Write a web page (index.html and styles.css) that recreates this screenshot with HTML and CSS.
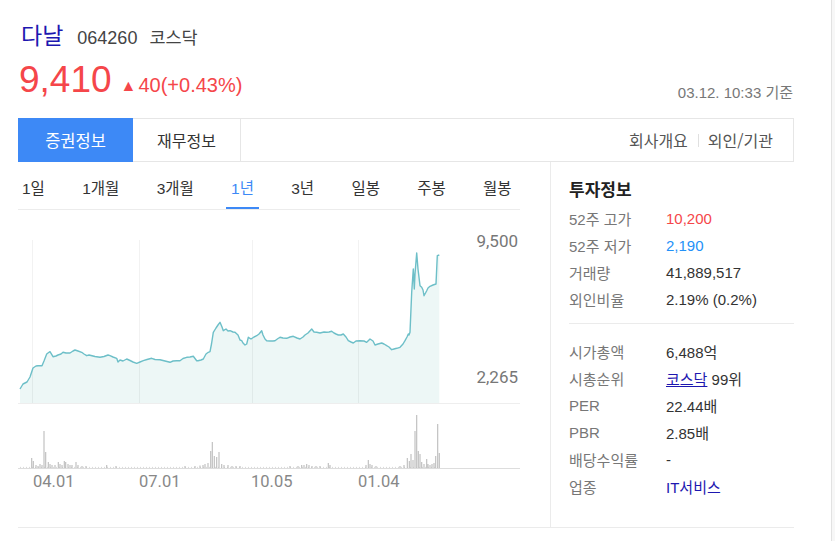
FILE: index.html
```html
<!DOCTYPE html>
<html lang="ko">
<head>
<meta charset="utf-8">
<title>다날</title>
<link rel="stylesheet" href="styles.css">
</head>
<body>
<div class="page">
  <header class="head">
    <div class="title-row">
      <a class="name">다날</a>
      <span class="code">064260</span>
      <span class="market">코스닥</span>
    </div>
    <div class="price-row">
      <div class="price">
        <span class="now">9,410</span>
        <span class="change"><span class="tri">▲</span>40(+0.43%)</span>
      </div>
      <div class="time">03.12. 10:33 기준</div>
    </div>
  </header>

  <div class="main">
    <nav class="tabs">
      <a class="tab active">증권정보</a>
      <a class="tab">재무정보</a>
      <div class="tab-links">
        <a>회사개요</a><span class="bar"></span><a>외인/기관</a>
      </div>
    </nav>

    <div class="cols">
      <section class="left">
        <ul class="periods">
          <li>1일</li>
          <li>1개월</li>
          <li>3개월</li>
          <li class="on">1년</li>
          <li>3년</li>
          <li>일봉</li>
          <li>주봉</li>
          <li>월봉</li>
        </ul>
        <svg class="chart" width="502" height="290" viewBox="18 211 502 290">
          <path class="fill" d="M20,390 L23,385 27,383 30,378 33,369 36,367 38,366.7 42,366.7 44,362 46.7,355 48,354 50,352.7 53,357.7 56,357 58,356 61,355 63,353.3 66,354 70,354 73,352 75,351 78,352 81.7,353.3 84,355 86.7,356.7 89,356 92,356.7 95,357.5 100,358.3 104,357.5 108,356 110,356.7 113,358 116.7,359.3 118,363 120,361 123,362 126.7,360 130,361.5 133,363 136.7,364.3 140,363 143.3,361.7 147,360.5 151.7,359.3 155,360.5 160,360.7 165,362 170,363.3 173,362 176.7,361.7 180,361.7 183,359.5 186.7,358.3 190,358 193.3,357.3 196.7,361.7 198,361.7 201,361 203.3,360 206,355 208.3,353.3 210,352.7 211.5,345 213.3,333.3 216,329 218,326 220,323.3 222,328 223.3,331.7 226,330 228,332 230,331.7 233,333 235,333.3 238,336 240,341 241.7,341.7 243,344 245,346 246.7,345 248.3,338.3 251,340 254,338 256.7,336.7 259,335 261.7,331.7 263,336 265,340 266.7,341.7 270,342 273,342 275,341.7 278,339.5 280,338.3 283,339 286.7,339.3 290,338 293.3,337.3 297,339 300,340 303,338 305,336 308,334 311.7,330 314,333 316.7,333.3 320,334 324,333 326.7,333.3 329,333 331.7,332.3 334,334 336,335 338.3,336 341,336 343.3,335 346,338 348.3,341.7 351,343 353.3,344 356,342 360,341.7 364,342 366.7,343.3 368,342 370,340 373,342 375,346 378,345 381.7,344 384,345 386.7,346.7 389,348 391.7,350.7 394,350 396.7,349.3 400,348.3 403,345 405,341.7 407,338 408.3,335 409,336 410,333.3 411.7,293.3 413.3,270 414.3,290 415,275 416.7,254 418,270 420,286.7 421.7,288.3 423,291 424,296.7 425.5,294 426.7,291.7 428,289 430,287.3 433,286 436,285 437.3,256.7 439.3,256 L439.3,404 L20,404 Z"/>
          <g class="grid">
            <path d="M32.5,241V404M139.5,241V404M252.5,241V404M358.5,241V404"/>
          </g>
          <path class="axis" d="M18,404.5H520"/>
          <polyline class="line" points="20,390 23,385 27,383 30,378 33,369 36,367 38,366.7 42,366.7 44,362 46.7,355 48,354 50,352.7 53,357.7 56,357 58,356 61,355 63,353.3 66,354 70,354 73,352 75,351 78,352 81.7,353.3 84,355 86.7,356.7 89,356 92,356.7 95,357.5 100,358.3 104,357.5 108,356 110,356.7 113,358 116.7,359.3 118,363 120,361 123,362 126.7,360 130,361.5 133,363 136.7,364.3 140,363 143.3,361.7 147,360.5 151.7,359.3 155,360.5 160,360.7 165,362 170,363.3 173,362 176.7,361.7 180,361.7 183,359.5 186.7,358.3 190,358 193.3,357.3 196.7,361.7 198,361.7 201,361 203.3,360 206,355 208.3,353.3 210,352.7 211.5,345 213.3,333.3 216,329 218,326 220,323.3 222,328 223.3,331.7 226,330 228,332 230,331.7 233,333 235,333.3 238,336 240,341 241.7,341.7 243,344 245,346 246.7,345 248.3,338.3 251,340 254,338 256.7,336.7 259,335 261.7,331.7 263,336 265,340 266.7,341.7 270,342 273,342 275,341.7 278,339.5 280,338.3 283,339 286.7,339.3 290,338 293.3,337.3 297,339 300,340 303,338 305,336 308,334 311.7,330 314,333 316.7,333.3 320,334 324,333 326.7,333.3 329,333 331.7,332.3 334,334 336,335 338.3,336 341,336 343.3,335 346,338 348.3,341.7 351,343 353.3,344 356,342 360,341.7 364,342 366.7,343.3 368,342 370,340 373,342 375,346 378,345 381.7,344 384,345 386.7,346.7 389,348 391.7,350.7 394,350 396.7,349.3 400,348.3 403,345 405,341.7 407,338 408.3,335 409,336 410,333.3 411.7,293.3 413.3,270 414.3,290 415,275 416.7,254 418,270 420,286.7 421.7,288.3 423,291 424,296.7 425.5,294 426.7,291.7 428,289 430,287.3 433,286 436,285 437.3,256.7 439.3,256"/>
          <text class="ylab" x="518" y="248" text-anchor="end">9,500</text>
          <text class="ylab" x="518" y="384" text-anchor="end">2,265</text>

          <path class="vol-base" d="M18,469.5H520"/>
          <path class="vol-tiny" d="M20,468.4H439"/>
          <path class="vol" d="M31.7,469V459M33.3,469V462M36,469V466M38,469V467M40,469V465M42,469V466M44,469V432M45.7,469V453M48.3,469V463M50,469V465M52,469V466M55,469V466M58.3,469V463M60,469V465M62,469V466M64.3,469V462M65.7,469V463M68,469V465M70,469V466M72,469V466M76,469V463M78,469V466M82,469V467M86,469V467M106.7,469V466M116,469V467M185,469V467M195,469V467M200,469V466.5M203,469V466M205,469V465M208,469V464M210.7,469V452M212.3,469V443M214.3,469V457M216.7,469V458M219,469V453M221.7,469V465M224,469V466M228,469V466M232,469V467M236,469V467M240,469V467M290,469V467M298,469V467M301.7,469V466M304,469V466M306.7,469V465M309,469V466M312,469V467M316,469V467M320,469V467M328.3,469V464M330,469V466M366,469V466M368.3,469V461M370,469V465M372,469V466M376,469V467M400,469V467M404,469V466M407.3,469V459M409.3,469V462M411,469V455M413,469V461M415,469V432M416.7,469V416M418.3,469V452M420,469V455M421.7,469V463M424,469V465M426.7,469V460M428,469V465M430,469V466M432,469V465M434,469V464M435.7,469V457M437.7,469V425M439.3,469V454"/>

          <text class="xlab" x="33" y="488">04.01</text>
          <text class="xlab" x="139" y="488">07.01</text>
          <text class="xlab" x="251" y="488">10.05</text>
          <text class="xlab" x="358" y="488">01.04</text>
        </svg>
      </section>

      <aside class="right">
        <h3 class="info-title">투자정보</h3>
        <dl class="info">
          <div class="row"><dt>52주 고가</dt><dd class="up">10,200</dd></div>
          <div class="row"><dt>52주 저가</dt><dd class="down">2,190</dd></div>
          <div class="row"><dt>거래량</dt><dd>41,889,517</dd></div>
          <div class="row"><dt>외인비율</dt><dd>2.19% (0.2%)</dd></div>
        </dl>
        <dl class="info second">
          <div class="row"><dt>시가총액</dt><dd>6,488억</dd></div>
          <div class="row"><dt>시총순위</dt><dd><a class="link ul">코스닥</a> 99위</dd></div>
          <div class="row"><dt>PER</dt><dd>22.44배</dd></div>
          <div class="row"><dt>PBR</dt><dd>2.85배</dd></div>
          <div class="row"><dt>배당수익률</dt><dd>-</dd></div>
          <div class="row"><dt>업종</dt><dd><a class="link">IT서비스</a></dd></div>
        </dl>
      </aside>
    </div>
  </div>
</div>
</body>
</html>
```

FILE: styles.css
```css
html {
  background: #f7f7f7;
}
body {
  margin: 0;
  font-family: "Liberation Sans", "Noto Sans CJK KR", sans-serif;
  color: #333;
}
.page {
  width: 831px;
  min-height: 541px;
  background: #fff;
  border-right: 1px solid #e2e2e2;
}
a { text-decoration: none; color: inherit; }

.head {
  padding: 17px 0 0 0;
}
.title-row {
  display: flex;
  align-items: baseline;
  padding-left: 21px;
  height: 32px;
}
.name {
  font-size: 23px;
  color: #1d17b0;
  font-family: "Noto Sans CJK KR", sans-serif;
  margin-right: 14px;
}
.code {
  font-size: 18px;
  color: #444;
  margin-right: 12px;
}
.market {
  font-size: 17.5px;
  color: #444;
  font-family: "Noto Sans CJK KR", sans-serif;
}
.price-row {
  display: flex;
  justify-content: space-between;
  align-items: flex-end;
  width: 776px;
  margin-left: 18px;
  margin-top: 9px;
  height: 42px;
}
.price {
  display: flex;
  align-items: baseline;
  color: #f5464a;
  padding-left: 1px;
}
.now {
  font-size: 37px;
  line-height: 40px;
  margin-right: 9px;
}
.change {
  font-size: 20px;
}
.tri {
  font-size: 16px;
  margin-right: 2px;
  position: relative;
  top: -1px;
}
.time {
  font-size: 15px;
  color: #777;
  line-height: 16px;
  padding-right: 1px;
  margin-bottom: -1px;
}

.main {
  width: 776px;
  margin-left: 18px;
  margin-top: 18px;
}
.tabs {
  display: flex;
  align-items: stretch;
  height: 42px;
  border: 1px solid #e6e6e6;
  border-left: 0;
}
.tab {
  display: flex;
  align-items: center;
  justify-content: center;
  font-size: 16px;
  color: #333;
  font-family: "Noto Sans CJK KR", sans-serif;
}
.tab.active {
  width: 115px;
  background: #3d89f6;
  color: #fff;
  margin: -1px 0;
  font-size: 16.5px;
}
.tab:nth-child(2) {
  width: 107px;
  border-right: 1px solid #e6e6e6;
}
.tab-links {
  margin-left: auto;
  display: flex;
  align-items: center;
  padding-right: 20px;
  font-size: 16px;
  color: #555;
  font-family: "Noto Sans CJK KR", sans-serif;
}
.tab-links .bar {
  display: inline-block;
  width: 1px;
  height: 13px;
  background: #e0e0e0;
  margin: 0 9px 0 10px;
}

.cols {
  display: flex;
  border-bottom: 1px solid #ebebeb;
  height: 365px;
}
.left {
  width: 502px;
  padding-right: 30px;
  flex-shrink: 0;
}
.periods {
  list-style: none;
  margin: 0;
  padding: 0;
  display: flex;
  height: 47px;
  border-bottom: 1px solid #ececec;
  gap: 27.3px;
  font-size: 15.5px;
  color: #333;
  white-space: nowrap;
  font-family: "Liberation Sans", "Noto Sans CJK KR", sans-serif;
}
.periods li {
  display: flex;
  flex-shrink: 0;
  align-items: center;
  padding: 4px 5px 0;
  height: 41px;
  border-bottom: 2px solid transparent;
}
.periods li:first-child { padding-left: 4px; }
.periods li.on {
  color: #3d89f6;
  border-bottom-color: #3d89f6;
}
.chart {
  display: block;
}
.fill { fill: #edf7f6; }
.grid path { stroke: rgba(0, 0, 0, 0.05); stroke-width: 1; fill: none; }
.axis { stroke: #eeeeee; stroke-width: 1; }
.line { fill: none; stroke: #6dbfc8; stroke-width: 1.4; stroke-linejoin: round; }
.ylab { font-family: Roboto, sans-serif; font-size: 17px; fill: #777; }
.xlab { font-family: Roboto, sans-serif; font-size: 16.5px; fill: #888; }
.vol-base { stroke: #dddddd; stroke-width: 1; }
.vol-tiny { stroke: #cccccc; stroke-width: 0.8; stroke-dasharray: 1 2; }
.vol { stroke: #bcbcbc; stroke-width: 1.1; fill: none; }

.right {
  flex: 1;
  border-left: 1px solid #ebebeb;
  padding: 17px 0 0 18px;
}
.info-title {
  margin: 0;
  font-size: 17px;
  font-weight: bold;
  color: #222;
  line-height: 20px;
  font-family: "Noto Sans CJK KR", sans-serif;
}
.info {
  margin: 6px 0 0 0;
  padding-bottom: 10px;
  border-bottom: 1px solid #ebebeb;
}
.info.second {
  margin-top: 14px;
  border-bottom: 0;
}
.row {
  display: flex;
  height: 27px;
  align-items: center;
  font-size: 15px;
}
.row dt {
  width: 97px;
  color: #777;
}
.row dd {
  margin: 0;
  color: #333;
}
.row dd.up { color: #f5464a; }
.row dd.down { color: #2391f8; }
.link { color: #1d17b0; }
.link.ul { text-decoration: underline; }
```
